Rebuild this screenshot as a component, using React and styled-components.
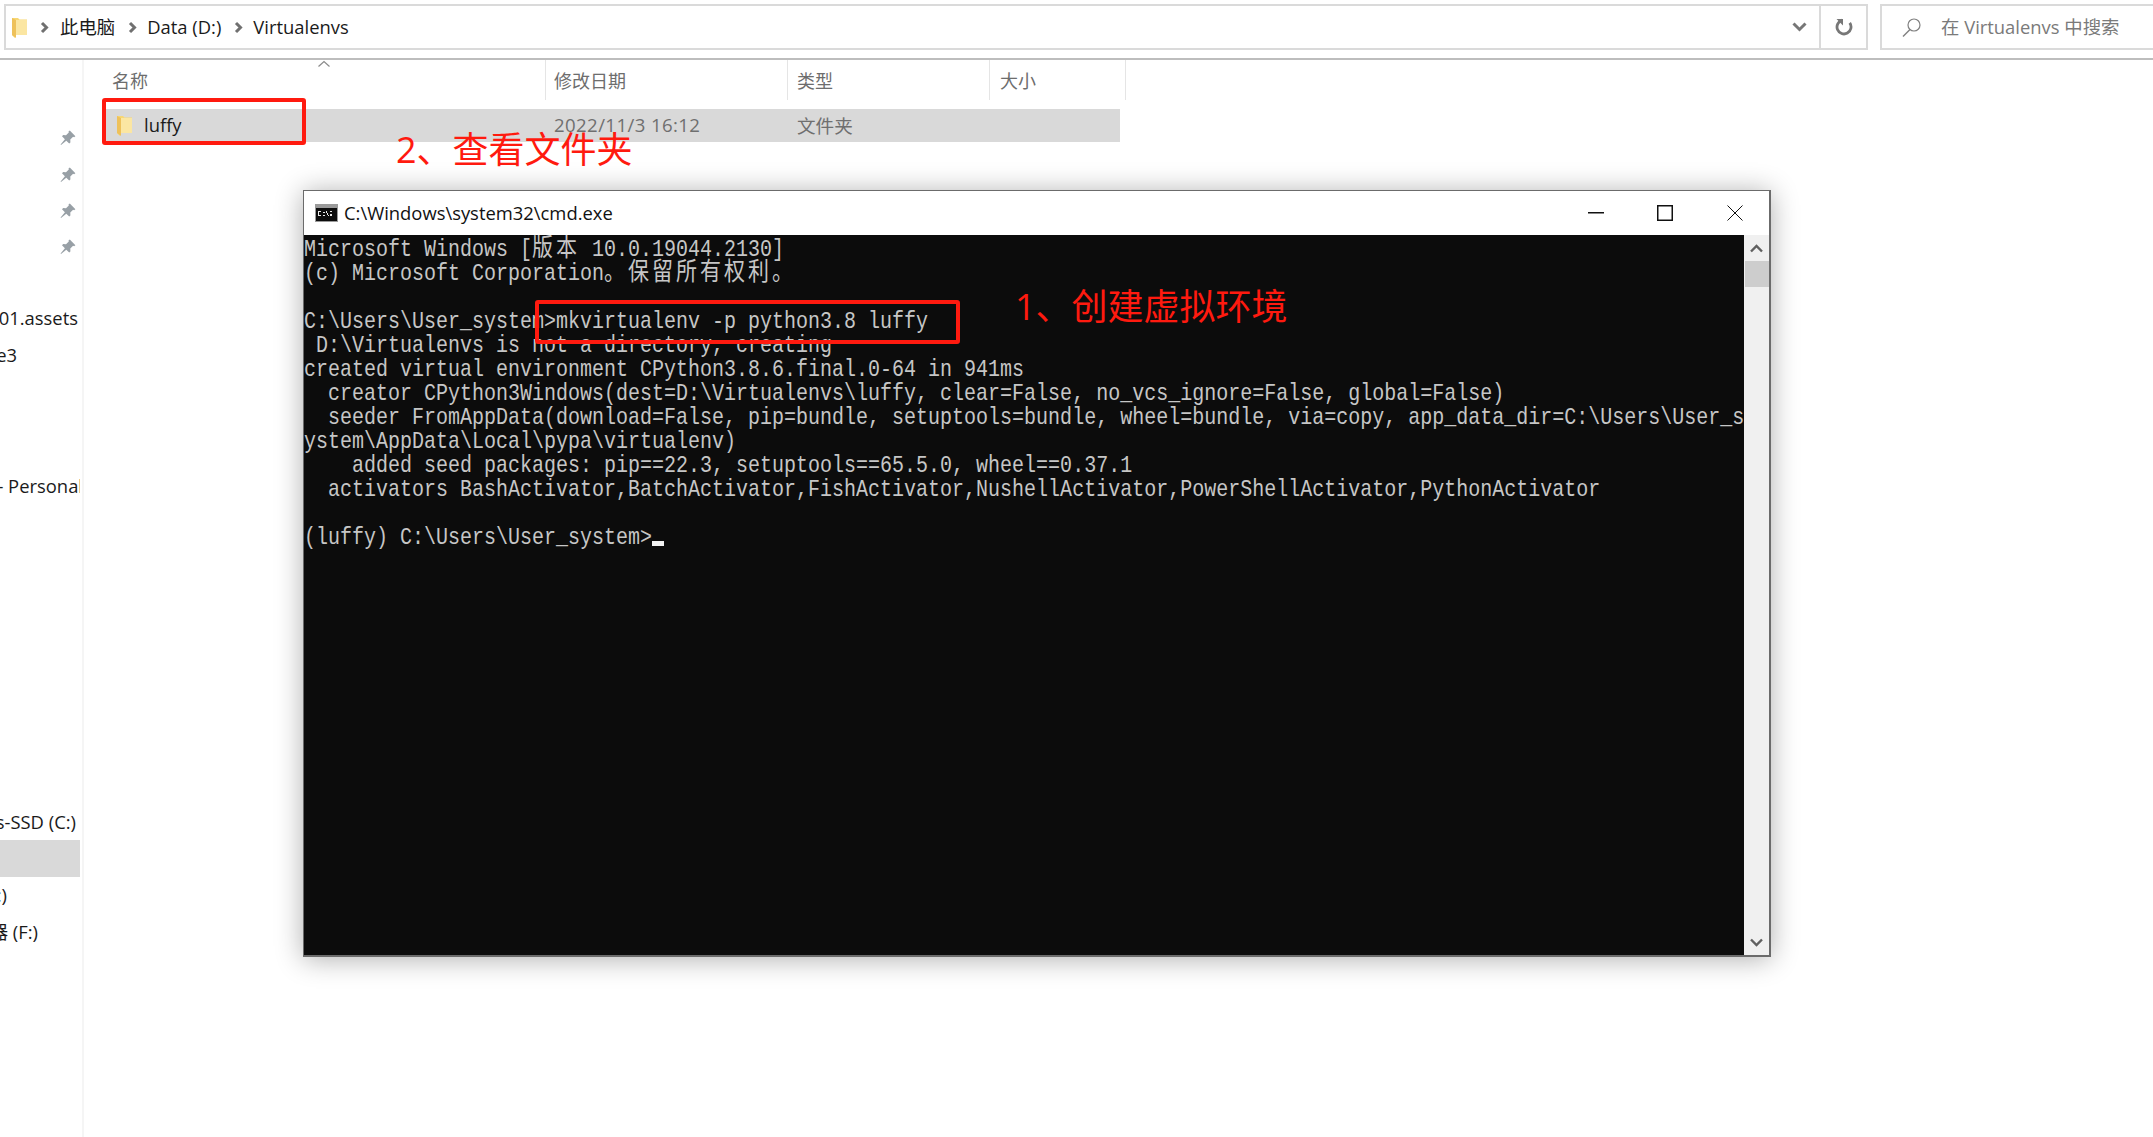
import styled, { createGlobalStyle } from "styled-components";

const GlobalStyle = createGlobalStyle`
  html, body {
    margin: 0;
    background: #ffffff;
    overflow: hidden;
  }
`;

const Page = styled.div`
  position: relative;
  width: 2153px;
  height: 1137px;
  display: flex;
  flex-direction: column;
  overflow: hidden;
  font-family: "Open Sans", "Noto Sans CJK SC", sans-serif;
  font-size: 18px;
  color: #1a1a1a;
`;

const TopBar = styled.div`
  flex: none;
  height: 60px;
  box-sizing: border-box;
  padding: 4px 0 8px 4px;
  display: flex;
  border-bottom: 2px solid #bdbdbd;
`;

const AddressBox = styled.div`
  flex: none;
  width: 1817px;
  box-sizing: border-box;
  display: flex;
  align-items: center;
  padding-left: 6px;
  border: 2px solid #dadada;
`;

const Crumb = styled.span`
  margin-left: ${(p) => p.$left}px;
  padding-bottom: 2px;
  font-size: 18.4px;
  white-space: nowrap;
`;

const Arrow = styled.span`
  margin-left: auto;
  width: 40px;
  display: flex;
  align-items: center;
  justify-content: center;
`;

const RefreshBox = styled.div`
  flex: none;
  width: 47px;
  box-sizing: border-box;
  display: flex;
  align-items: center;
  justify-content: center;
  border: 2px solid #dadada;
  border-left: none;
`;

const SearchBox = styled.div`
  flex: 1;
  margin-left: 12px;
  margin-right: -4px;
  box-sizing: border-box;
  display: flex;
  align-items: center;
  padding-left: 20px;
  border: 2px solid #dadada;
`;

const SearchText = styled.span`
  margin-left: 20px;
  padding-bottom: 2px;
  font-size: 18.4px;
  color: #7a7a7a;
  white-space: nowrap;
`;

const Main = styled.div`
  flex: 1;
  display: flex;
  min-height: 0;
`;

const Sidebar = styled.div`
  flex: none;
  width: 84px;
  box-sizing: border-box;
  padding: 60px 2px 0 0;
  border-right: 2px solid #f5f5f5;
  overflow: hidden;
`;

const NavRow = styled.div`
  height: 36.4px;
  margin-top: ${(p) => p.$top || 0}px;
  padding-right: ${(p) => p.$right || 0}px;
  display: flex;
  align-items: center;
  justify-content: flex-end;
  white-space: nowrap;
  font-size: 18.4px;
  overflow: hidden;
  background: ${(p) => (p.$active ? "#d9d9d9" : "transparent")};
`;

const NavText = styled.span`
  flex: none;
  margin-right: ${(p) => p.$shift || 0}px;
`;

const Files = styled.div`
  flex: 1;
  padding-left: 20px;
`;

const HeaderRow = styled.div`
  height: 40px;
  width: 1022px;
  display: grid;
  grid-template-columns: 442px 242px 202px 136px;
`;

const HeaderCell = styled.div`
  position: relative;
  display: flex;
  align-items: center;
  box-sizing: border-box;
  padding-left: ${(p) => p.$pad}px;
  padding-bottom: 1px;
  border-right: 1px solid #e5e5e5;
  font-size: 18px;
  color: #6d6d6d;
`;

const SortCaret = styled.svg`
  position: absolute;
  left: 213px;
  top: 0;
`;

const FileRow = styled.div`
  margin-top: 9px;
  height: 33px;
  width: 1016px;
  display: grid;
  grid-template-columns: 442px 242px 202px 130px;
  align-items: center;
  background: #d9d9d9;
`;

const NameCell = styled.div`
  display: flex;
  align-items: center;
  gap: 12px;
  padding-left: 13px;
  font-size: 18.4px;
`;

const FileName = styled.span`
  padding-bottom: 2px;
`;

const MetaCell = styled.div`
  padding-left: ${(p) => p.$pad}px;
  padding-bottom: 2px;
  font-size: 18.6px;
  letter-spacing: ${(p) => p.$track || 0}px;
  color: #6f6f6f;
  white-space: nowrap;
`;

const Annotation = styled.div`
  position: absolute;
  left: ${(p) => p.$x}px;
  top: ${(p) => p.$y}px;
  z-index: 3;
  font-size: 36px;
  line-height: 44px;
  color: #ff1a0f;
  white-space: nowrap;
`;

const RedBox = styled.div`
  position: absolute;
  left: ${(p) => p.$x}px;
  top: ${(p) => p.$y}px;
  width: ${(p) => p.$w}px;
  height: ${(p) => p.$h}px;
  z-index: 3;
  box-sizing: border-box;
  border: 4px solid #ff1a0f;
  border-radius: 3px;
`;

const CmdWindow = styled.div`
  position: absolute;
  left: 303px;
  top: 190px;
  z-index: 2;
  width: 1468px;
  box-sizing: border-box;
  border: 1px solid #6b6b6b;
  border-width: 1px 2px 2px 1px;
  background: #ffffff;
  box-shadow: 0 2px 26px rgba(0, 0, 0, 0.32);
`;

const TitleBar = styled.div`
  height: 44px;
  display: flex;
  align-items: center;
  padding-left: 11px;
`;

const TitleText = styled.span`
  margin-left: 6px;
  padding-bottom: 2px;
  font-size: 18.4px;
  color: #111111;
`;

const WindowButtons = styled.div`
  margin-left: auto;
  display: flex;
  align-items: center;
`;

const WindowButton = styled.span`
  width: ${(p) => p.$w}px;
  display: flex;
  justify-content: center;
`;

const ConsoleArea = styled.div`
  display: flex;
  height: 720px;
`;

const Console = styled.div`
  position: relative;
  flex: none;
  width: 1440px;
  height: 720px;
  box-sizing: border-box;
  padding-top: 2.500px;
  overflow: hidden;
  background: #0c0c0c;
`;

const ConsoleLine = styled.div`
  height: 24px;
  line-height: 24px;
  font-family: "Liberation Mono", "Noto Sans CJK SC", monospace;
  font-size: 20px;
  color: #c6c6c6;
  white-space: pre;
  transform: scaleY(1.18);
  transform-origin: 50% 55%;
`;

const Cjk = styled.span`
  font-family: "Noto Sans CJK SC", sans-serif;
  font-size: 21px;
  line-height: 0;
  letter-spacing: 3px;
`;

const Cursor = styled.span`
  position: absolute;
  left: 348px;
  top: 306px;
  width: 12px;
  height: 5px;
  background: #f2f2f2;
`;

const Scrollbar = styled.div`
  flex: 1;
  display: flex;
  flex-direction: column;
  background: #f0f0f0;
`;

const ScrollButton = styled.div`
  flex: none;
  height: 26px;
  display: flex;
  align-items: center;
  justify-content: center;
`;

const ScrollThumb = styled.div`
  flex: none;
  height: 26px;
  margin-left: 1px;
  background: #cdcdcd;
`;

const ScrollTrack = styled.div`
  flex: 1;
`;

const CJK_RE = /([\u3000-\u303f\u4e00-\u9fff]+)/;

const consoleLines = [
  "Microsoft Windows [版本 10.0.19044.2130]",
  "(c) Microsoft Corporation。保留所有权利。",
  "",
  "C:\\Users\\User_system>mkvirtualenv -p python3.8 luffy",
  " D:\\Virtualenvs is not a directory, creating",
  "created virtual environment CPython3.8.6.final.0-64 in 941ms",
  "  creator CPython3Windows(dest=D:\\Virtualenvs\\luffy, clear=False, no_vcs_ignore=False, global=False)",
  "  seeder FromAppData(download=False, pip=bundle, setuptools=bundle, wheel=bundle, via=copy, app_data_dir=C:\\Users\\User_s",
  "ystem\\AppData\\Local\\pypa\\virtualenv)",
  "    added seed packages: pip==22.3, setuptools==65.5.0, wheel==0.37.1",
  "  activators BashActivator,BatchActivator,FishActivator,NushellActivator,PowerShellActivator,PythonActivator",
  "",
  "(luffy) C:\\Users\\User_system>",
];

const FolderIcon = () => (
  <svg width="15" height="21" viewBox="0 0 15 21">
    <path d="M0 1h6l1.500 1.500H15V18H3v3L0 18z" fill="#f7d774" />
    <path d="M4 3h11v15H4z" fill="#fbe6a2" />
    <path d="M0 1l4 2v18l-4-3z" fill="#eec15a" />
  </svg>
);

const Chevron = () => (
  <svg width="9" height="13" viewBox="0 0 9 13" style={{ marginLeft: 13 }}>
    <path d="M2 2L6.500 6.500L2 11" fill="none" stroke="#707070" strokeWidth="3" />
  </svg>
);

const PinIcon = () => (
  <svg width="16" height="16" viewBox="0 0 16 16">
    <path
      d="M9.800.6l5.600 5.600-1.300 1-1-.4-2.800 2.800.1 2.800-1.200 1.200-2.900-2.900L1 15l-.4-.4 4.300-5.400L2 6.300l1.200-1.200 2.800.1 2.800-2.800-.3-1z"
      fill="#98a0a6"
    />
  </svg>
);

const ScrollArrow = ({ down }) => (
  <svg width="13" height="9" viewBox="0 0 13 9">
    <path
      d={down ? "M1 1.500L6.500 7L12 1.500" : "M1 7.500L6.500 2L12 7.500"}
      fill="none"
      stroke="#606060"
      strokeWidth="2.400"
    />
  </svg>
);

export default function App() {
  return (
    <Page>
      <GlobalStyle />
      <TopBar>
        <AddressBox>
          <FolderIcon />
          <Chevron />
          <Crumb $left={11}>此电脑</Crumb>
          <Chevron />
          <Crumb $left={10}>Data (D:)</Crumb>
          <Chevron />
          <Crumb $left={10}>Virtualenvs</Crumb>
          <Arrow>
            <svg width="15" height="10" viewBox="0 0 15 10">
              <path d="M1.500 1.500L7.500 7.500L13.500 1.500" fill="none" stroke="#777777" strokeWidth="3" />
            </svg>
          </Arrow>
        </AddressBox>
        <RefreshBox>
          <svg width="18" height="18" viewBox="0 0 18 18">
            <path
              d="M5 3.200A7 7 0 1 0 13 3.200"
              fill="none"
              stroke="#777777"
              strokeWidth="2.800"
              transform="rotate(20 9 9)"
            />
            <path d="M1.500 1h6.500v6.500z" fill="#777777" />
          </svg>
        </RefreshBox>
        <SearchBox>
          <svg width="19" height="19" viewBox="0 0 19 19">
            <circle cx="12" cy="7" r="6" fill="none" stroke="#808080" strokeWidth="1.200" />
            <path d="M8 11.500L1 18.500" stroke="#808080" strokeWidth="1.400" />
          </svg>
          <SearchText>在 Virtualenvs 中搜索</SearchText>
        </SearchBox>
      </TopBar>

      <Main>
        <Sidebar>
          {[0, 1, 2, 3].map((i) => (
            <NavRow key={i} $right={4}>
              <PinIcon />
            </NavRow>
          ))}
          <NavRow $top={34} $right={2}>
            <NavText>r01.assets</NavText>
          </NavRow>
          <NavRow $right={63}>
            <NavText>e3</NavText>
          </NavRow>
          <NavRow $top={95}>
            <NavText $shift={-3}>- Personal</NavText>
          </NavRow>
          <NavRow $top={300} $right={4}>
            <NavText>s-SSD (C:)</NavText>
          </NavRow>
          <NavRow $active />
          <NavRow $right={73}>
            <NavText>:)</NavText>
          </NavRow>
          <NavRow $right={42}>
            <NavText>器 (F:)</NavText>
          </NavRow>
        </Sidebar>

        <Files>
          <HeaderRow>
            <HeaderCell $pad={8}>
              名称
              <SortCaret width="14" height="8" viewBox="0 0 14 8">
                <path d="M1.500 6.500L7 1.500L12.500 6.500" fill="none" stroke="#8a8a8a" strokeWidth="1.200" />
              </SortCaret>
            </HeaderCell>
            <HeaderCell $pad={8}>修改日期</HeaderCell>
            <HeaderCell $pad={9}>类型</HeaderCell>
            <HeaderCell $pad={10}>大小</HeaderCell>
          </HeaderRow>
          <FileRow>
            <NameCell>
              <FolderIcon />
              <FileName>luffy</FileName>
            </NameCell>
            <MetaCell $pad={8} $track={0.4}>2022/11/3 16:12</MetaCell>
            <MetaCell $pad={9}>文件夹</MetaCell>
            <MetaCell $pad={10} />
          </FileRow>
        </Files>
      </Main>

      <RedBox $x={102} $y={98} $w={204} $h={47} />
      <Annotation $x={396} $y={128}>2、查看文件夹</Annotation>

      <CmdWindow>
        <TitleBar>
          <svg width="23" height="18" viewBox="0 0 23 18">
            <rect width="23" height="18" fill="#9a9a9a" />
            <rect x="1" y="4" width="21" height="13" fill="#0c0c0c" />
            <path
              d="M3 7h3v1H4v3h2v1H3zM8 8h2v1H8zM8 11h2v1H8zM11 7h1v2h-1zM12 9h1v2h-1zM13 11h1v1h-1zM15 7h2v1h-2zM15 10h2v2h-2z"
              fill="#e8e8e8"
            />
          </svg>
          <TitleText>C:\Windows\system32\cmd.exe</TitleText>
          <WindowButtons>
            <WindowButton $w={67}>
              <svg width="16" height="2" viewBox="0 0 16 2">
                <rect width="16" height="1.500" fill="#111111" />
              </svg>
            </WindowButton>
            <WindowButton $w={71}>
              <svg width="16" height="16" viewBox="0 0 16 16">
                <rect x=".75" y=".75" width="14.500" height="14.500" fill="none" stroke="#111111" strokeWidth="1.500" />
              </svg>
            </WindowButton>
            <WindowButton $w={69}>
              <svg width="16" height="16" viewBox="0 0 16 16">
                <path d="M.5.5L15.500 15.500M15.500.5L.5 15.500" stroke="#111111" strokeWidth="1" />
              </svg>
            </WindowButton>
          </WindowButtons>
        </TitleBar>
        <ConsoleArea>
          <Console>
            {consoleLines.map((line, i) => (
              <ConsoleLine key={i}>
                {line
                  ? line.split(CJK_RE).map((part, j) => (j % 2 ? <Cjk key={j}>{part}</Cjk> : part))
                  : " "}
              </ConsoleLine>
            ))}
            <Cursor />
          </Console>
          <Scrollbar>
            <ScrollButton>
              <ScrollArrow />
            </ScrollButton>
            <ScrollThumb />
            <ScrollTrack />
            <ScrollButton>
              <ScrollArrow down />
            </ScrollButton>
          </Scrollbar>
        </ConsoleArea>
      </CmdWindow>

      <RedBox $x={535} $y={300} $w={425} $h={44} />
      <Annotation $x={1015} $y={285}>1、创建虚拟环境</Annotation>
    </Page>
  );
}
